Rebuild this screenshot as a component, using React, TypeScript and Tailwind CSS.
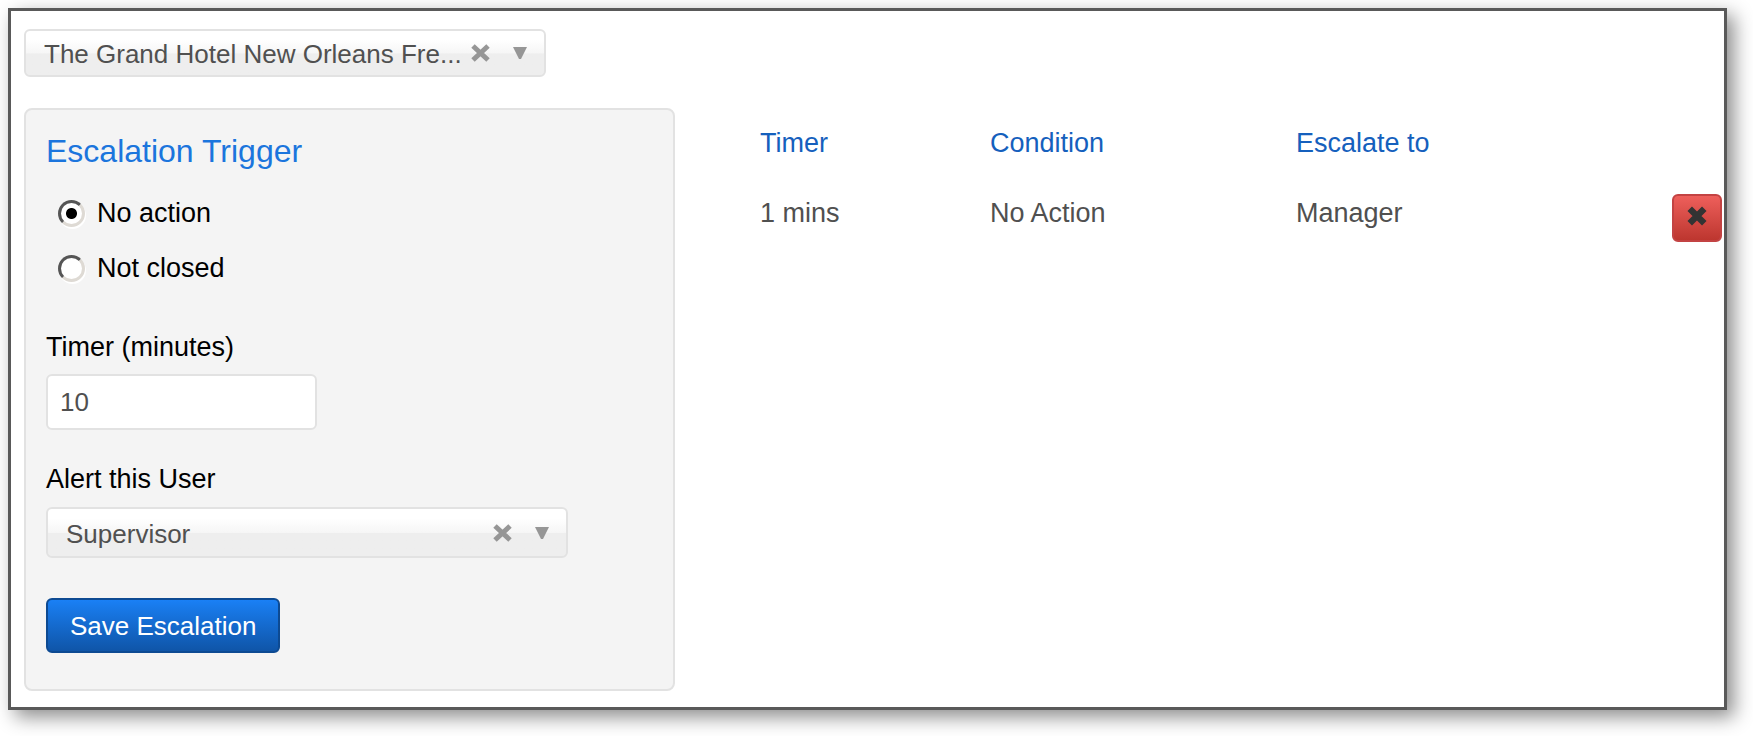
import React, { useState } from 'react';

interface PickerProps {
  id: string;
  label?: string;
  options: string[];
  className: string;
}

const ClearIcon = () => (
  <svg width="19" height="18" viewBox="0 0 19 18" fill="none" stroke="#969696" strokeWidth="5">
    <path d="M2 2 L17 16 M17 2 L2 16" />
  </svg>
);

const ArrowIcon = () => (
  <svg width="14" height="12" viewBox="0 0 14 12" fill="#969696">
    <path d="M0 0 H14 L8 12 H6 Z" />
  </svg>
);

const Picker: React.FC<PickerProps> = ({ id, label, options, className }) => {
  const [value, setValue] = useState(options[0]);

  return (
    <div className="relative w-[522px]">
      <select
        id={id}
        aria-label={label}
        value={value}
        onChange={(e) => setValue(e.target.value)}
        className={`block w-full appearance-none rounded-md border-2 border-[#e2e2e2] bg-linear-to-b from-white from-20% via-[#f6f6f6] via-50% to-[#eeeeee] to-52% pt-0.5 pl-[18px] text-[26px] leading-8 text-[#505050] outline-none ${className}`}
      >
        <option value="" />
        {options.map((option) => (
          <option key={option}>{option}</option>
        ))}
      </select>
      <button
        type="button"
        aria-label="Clear"
        onClick={() => setValue('')}
        className="absolute inset-y-0 right-14 flex items-center"
      >
        <ClearIcon />
      </button>
      <span className="pointer-events-none absolute inset-y-0 right-[19px] flex items-center">
        <ArrowIcon />
      </span>
    </div>
  );
};

const Radio: React.FC<{ label: string; defaultChecked?: boolean }> = ({ label, defaultChecked }) => (
  <label className="flex items-center gap-3 text-[27px] leading-8 text-black">
    <input
      type="radio"
      name="trigger"
      defaultChecked={defaultChecked}
      className="h-[27px] w-[27px] appearance-none rounded-full border-3 border-t-[#555555] border-r-[#dedad4] border-b-[#dedad4] border-l-[#555555] bg-white shadow-[1px_2px_0_#ffffff] checked:bg-[radial-gradient(circle,#000000_5px,#ffffff_6px)]"
    />
    {label}
  </label>
);

const escalations = [{ timer: '1 mins', condition: 'No Action', escalateTo: 'Manager' }];

export default function App() {
  return (
    <div className="bg-white pt-2 pr-[26px] pb-[26px] pl-2 font-['Liberation_Sans',Arial,sans-serif]">
      <main className="border-3 border-[#595959] bg-white pt-[18px] pr-0.5 pb-4 pl-[13px] shadow-[7px_7px_18px_rgba(0,0,0,0.45)]">
        <Picker
          id="property"
          label="Property"
          options={['The Grand Hotel New Orleans Fre...']}
          className="h-12"
        />

        <div className="mt-[31px] flex items-start">
          <form
            onSubmit={(e) => e.preventDefault()}
            className="w-[651px] shrink-0 rounded-lg border-2 border-[#e2e2e2] bg-[#f4f4f4] px-5 pt-[21px] pb-9"
          >
            <h2 className="text-[32px] leading-10 text-[#1b75dd]">Escalation Trigger</h2>

            <div className="mt-[26px] mb-[47px] ml-3 flex flex-col gap-[23px]">
              <Radio label="No action" defaultChecked />
              <Radio label="Not closed" />
            </div>

            <label htmlFor="minutes" className="block text-[27px] leading-8 text-black">
              Timer (minutes)
            </label>
            <input
              id="minutes"
              type="text"
              defaultValue="10"
              className="mt-[11px] block h-14 w-[271px] rounded-md border-2 border-[#e2e2e2] bg-white px-3 text-[26px] leading-8 text-[#505050] outline-none"
            />

            <label htmlFor="user" className="mt-[33px] mb-3 block text-[27px] leading-8 text-black">
              Alert this User
            </label>
            <Picker id="user" options={['Supervisor']} className="h-[51px]" />

            <button
              type="submit"
              className="mt-10 h-[55px] rounded-md border-2 border-[#0d4a92] bg-linear-to-b from-[#1a80f5] to-[#0f55a8] px-[22px] text-[26px] leading-8 text-white"
            >
              Save Escalation
            </button>
          </form>

          <table className="ml-[85px] flex-1 table-fixed border-collapse text-left text-[27px] leading-8">
            <thead>
              <tr className="text-[#1560bd]">
                <th className="w-[230px] pt-[19px] pb-[19px] font-normal">Timer</th>
                <th className="w-[306px] pt-[19px] pb-[19px] font-normal">Condition</th>
                <th className="pt-[19px] pb-[19px] font-normal">Escalate to</th>
                <td className="w-[50px]" />
              </tr>
            </thead>
            <tbody>
              {escalations.map((row) => (
                <tr key={row.escalateTo} className="align-top text-[#505050]">
                  <td className="pt-[19px]">{row.timer}</td>
                  <td className="pt-[19px]">{row.condition}</td>
                  <td className="pt-[19px]">{row.escalateTo}</td>
                  <td className="pt-4">
                    <button
                      type="button"
                      aria-label="Delete escalation"
                      className="flex h-12 w-[50px] items-center justify-center rounded-md border-2 border-[#c34343] bg-linear-to-b from-[#ee5f5b] to-[#bd362f] pb-1"
                    >
                      <svg width="20" height="20" viewBox="0 0 22 22" fill="none" stroke="#333333" strokeWidth="7">
                        <path d="M3 3 L19 19 M19 3 L3 19" />
                      </svg>
                    </button>
                  </td>
                </tr>
              ))}
            </tbody>
          </table>
        </div>
      </main>
    </div>
  );
}
